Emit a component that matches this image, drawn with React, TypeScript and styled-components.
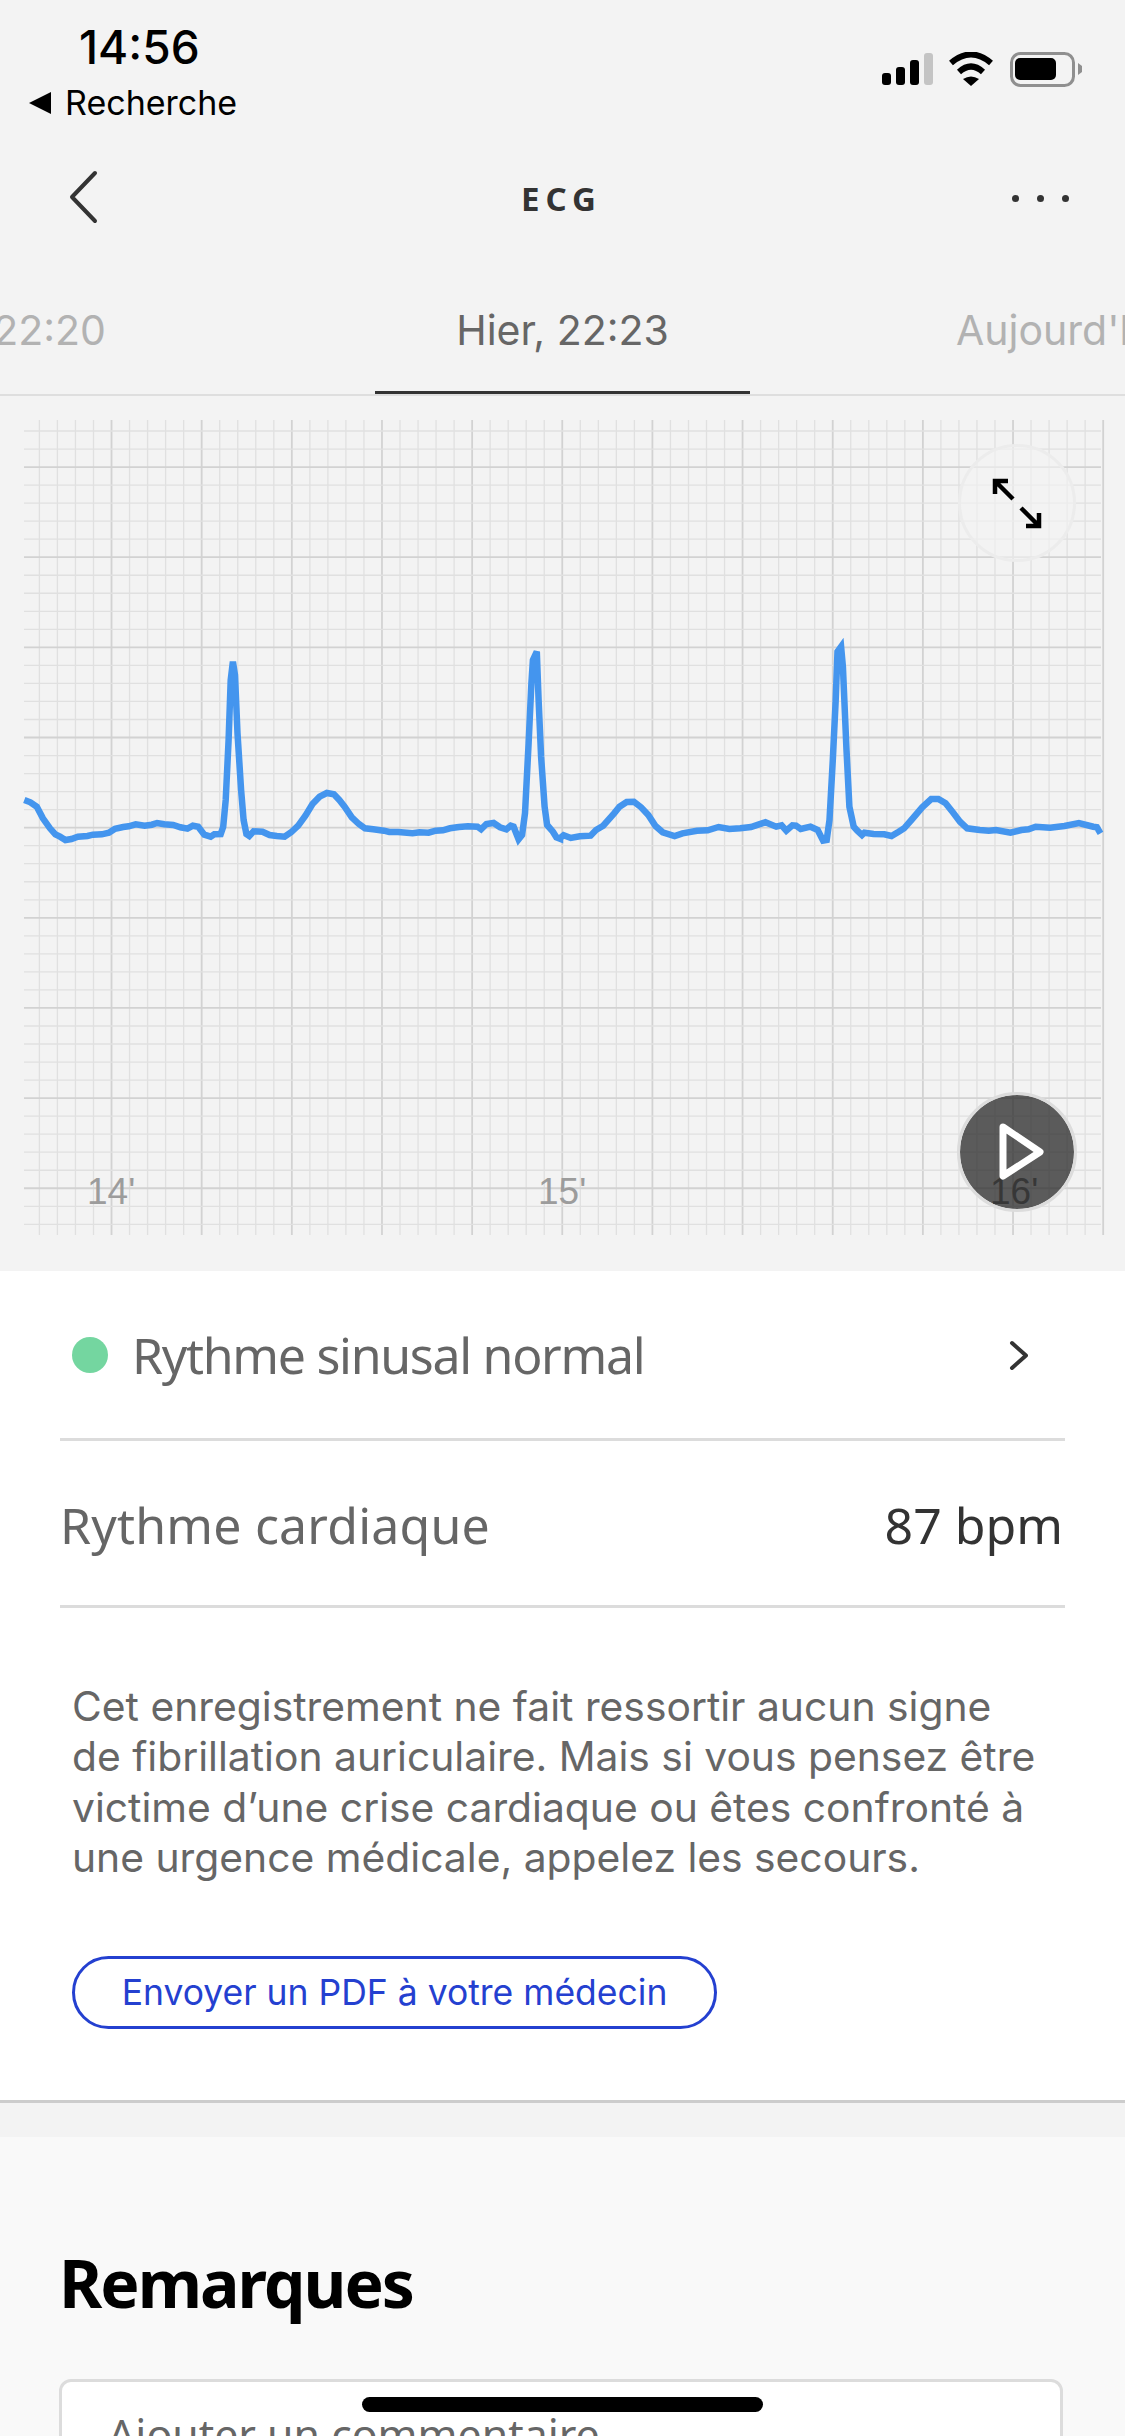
import React from 'react';
import styled, { createGlobalStyle } from 'styled-components';

const GlobalStyle = createGlobalStyle`
  html, body {
    margin: 0;
    padding: 0;
    background: #f3f3f3;
  }
  * {
    box-sizing: border-box;
  }
`;

// traced from the recording, [x, y] as read off two crops of the trace
const traceA = [[68,600],[85,607],[103,620],[120,655],[140,685],[155,703],[168,710],[183,720],[200,717],[218,710],[245,708],[260,704],[285,703],[305,698],[322,686],[345,681],[360,679],[380,673],[405,677],[425,674],[440,669],[460,673],[485,675],[505,682],[525,686],[540,677],[555,680],[572,704],[590,710],[600,703],[618,702],[625,680],[632,600],[640,420],[646,240],[652,185],[658,225],[665,400],[675,570],[682,660],[690,702],[698,708],[710,694],[735,695],[755,705],[775,708],[797,710],[815,697],[835,677],[855,647],[875,612],[895,590],[915,579],[935,583],[950,600],[965,620],[985,652],[1005,672],[1022,685],[1045,688],[1075,692],[1090,696],[1115,696],[1155,700],[1175,697],[1200,698],[1220,692],[1240,691],[1260,685],[1285,681],[1310,679],[1337,680],[1347,688],[1362,672],[1382,669],[1400,682],[1418,688],[1430,677],[1438,680],[1452,718],[1462,705],[1470,640],[1480,430],[1488,250],[1492,180],[1503,155],[1508,300],[1515,470],[1525,620],[1532,675],[1548,695],[1558,712],[1568,716]];
const traceB = [[0,715],[10,706],[30,714],[55,709],[85,707],[100,690],[120,677],[150,640],[165,620],[185,606],[205,605],[225,622],[245,645],[265,678],[285,697],[318,708],[340,700],[380,692],[410,691],[440,681],[470,687],[500,685],[530,681],[550,674],[570,667],[600,680],[615,676],[628,692],[645,676],[655,677],[668,687],[695,680],[715,690],[730,722],[740,720],[748,660],[757,480],[765,300],[770,155],[780,140],[785,200],[795,450],[803,620],[815,680],[825,692],[838,705],[845,698],[870,702],[900,703],[920,708],[940,695],[955,685],[975,660],[1005,622],[1030,597],[1050,597],[1070,610],[1090,637],[1110,665],[1130,685],[1165,690],[1190,692],[1210,690],[1250,698],[1280,690],[1300,688],[1320,680],[1360,683],[1400,678],[1440,669],[1480,680],[1490,682],[1500,700]];

const tracePoints = [
  ...traceA.map(([x, y]) => `${(x / 2.8).toFixed(1)},${(600 + y / 3).toFixed(1)}`),
  ...traceB.map(([x, y]) => `${(560 + x / 2.775).toFixed(1)},${(600 + y / 3).toFixed(1)}`),
].join(' ');

const STEP = 18.03;
const verticals = Array.from({ length: 60 }, (_, i) => 39.4 + i * STEP);
const horizontals = Array.from({ length: 45 }, (_, i) => 431 + i * STEP);

const EcgGrid = () => (
  <ChartSvg viewBox="0 396 1125 875" width={1125} height={875}>
    {verticals.map((x, i) => (
      <line
        key={`v${i}`}
        x1={x}
        x2={x}
        y1={420}
        y2={1235}
        stroke={i % 5 === 4 ? '#d2d2d2' : '#e0e0e0'}
        strokeWidth={i % 5 === 4 ? 1.8 : 1.3}
      />
    ))}
    {horizontals.map((y, i) => (
      <line
        key={`h${i}`}
        x1={24}
        x2={1101}
        y1={y}
        y2={y}
        stroke={i % 5 === 2 ? '#d2d2d2' : '#e0e0e0'}
        strokeWidth={i % 5 === 2 ? 1.8 : 1.3}
      />
    ))}
    <polyline
      points={tracePoints}
      fill="none"
      stroke="#4495ee"
      strokeWidth={6.5}
      strokeLinejoin="miter"
      strokeLinecap="butt"
    />
  </ChartSvg>
);

const StatusIcons = () => (
  <svg width={204} height={36} viewBox="880 52 204 36">
    <rect x={882} y={73} width={9} height={12} rx={3} fill="#000" />
    <rect x={896} y={67} width={9} height={18} rx={3} fill="#000" />
    <rect x={910} y={60} width={9} height={25} rx={3} fill="#000" />
    <rect x={924} y={53} width={9} height={32} rx={3} fill="#c4c4c4" />
    <path d="M951 63 Q971 46 991 63" fill="none" stroke="#000" strokeWidth={6} />
    <path d="M959 72 Q971 61 983 72" fill="none" stroke="#000" strokeWidth={6} />
    <path d="M963 79 Q971 74 979 79 L971 86 Z" fill="#000" />
    <rect x={1011.5} y={53.5} width={62} height={32} rx={9} fill="none" stroke="#8f8f8f" strokeWidth={3} />
    <rect x={1015} y={58} width={41} height={22} rx={5} fill="#000" />
    <path d="M1078 63 L1082 66 V72 L1078 75 Z" fill="#8f8f8f" />
  </svg>
);

export default function App() {
  return (
    <Page>
      <GlobalStyle />
      <StatusBar>
        <StatusLeft>
          <Clock>14:56</Clock>
          <BackLink>
            <BackTriangle />
            Recherche
          </BackLink>
        </StatusLeft>
        <StatusIcons />
      </StatusBar>

      <NavBar>
        <svg width={40} height={60} viewBox="60 168 40 60">
          <path d="M95 173 L72 197 L95 221" fill="none" stroke="#333" strokeWidth={4} strokeLinecap="round" strokeLinejoin="round" />
        </svg>
        <NavTitle>ECG</NavTitle>
        <MoreDots>
          <Dot />
          <Dot />
          <Dot />
        </MoreDots>
      </NavBar>

      <TabRow>
        <Tab $side="left">22:20</Tab>
        <Tab $side="active">Hier, 22:23</Tab>
        <Tab $side="right">Aujourd'hui</Tab>
      </TabRow>

      <ChartSection>
        <EcgGrid />
        <TimeLabel $left={87}>14'</TimeLabel>
        <TimeLabel $left={538}>15'</TimeLabel>
        <TimeLabel $left={990} $dark>16'</TimeLabel>
        <ExpandButton>
          <svg width={60} height={60} viewBox="987 473 60 60">
            <path d="M1013 499 L996 482 M995 494 L995 481 L1008 481" fill="none" stroke="#000" strokeWidth={4.5} />
            <path d="M1021 508 L1038 525 M1039 513 L1039 526 L1026 526" fill="none" stroke="#000" strokeWidth={4.5} />
          </svg>
        </ExpandButton>
        <PlayButton>
          <svg width={60} height={70} viewBox="987 1117 60 70">
            <path d="M1003 1127 L1040 1152 L1003 1176 Z" fill="none" stroke="#fff" strokeWidth={7} strokeLinejoin="round" />
          </svg>
        </PlayButton>
      </ChartSection>

      <ResultCard>
        <ResultRow $inset>
          <RowLabel>
            <GreenDot />
            <RhythmText $spacing={-1.3}>Rythme sinusal normal</RhythmText>
          </RowLabel>
          <svg width={20} height={30} viewBox="1008 1341 20 30">
            <path d="M1012 1344 L1026 1356.5 L1012 1369" fill="none" stroke="#333" strokeWidth={4} strokeLinecap="round" strokeLinejoin="round" />
          </svg>
        </ResultRow>
        <ResultRow>
          <RhythmText $spacing={0.2}>Rythme cardiaque</RhythmText>
          <RowValue>87 bpm</RowValue>
        </ResultRow>
        <Notice>
          Cet enregistrement ne fait ressortir aucun signe
          <br />
          de fibrillation auriculaire. Mais si vous pensez être
          <br />
          victime d’une crise cardiaque ou êtes confronté à
          <br />
          une urgence médicale, appelez les secours.
        </Notice>
        <PdfButton>Envoyer un PDF à votre médecin</PdfButton>
      </ResultCard>

      <Gap />

      <NotesSection>
        <NotesTitle>Remarques</NotesTitle>
        <CommentBox>Ajouter un commentaire</CommentBox>
      </NotesSection>

      <HomeIndicator />
    </Page>
  );
}

const Page = styled.div`
  position: relative;
  width: 1125px;
  height: 2436px;
  overflow: hidden;
  background: #f3f3f3;
  font-family: "Noto Sans", sans-serif;
`;

const StatusBar = styled.div`
  height: 148px;
  display: flex;
  justify-content: space-between;
  align-items: flex-start;
  padding: 18px 41px 0 0;

  svg {
    margin-top: 34px;
  }
`;

const StatusLeft = styled.div`
  display: flex;
  flex-direction: column;
  padding-left: 29px;
`;

const Clock = styled.div`
  font-family: Inter, sans-serif;
  font-weight: 500;
  font-size: 46px;
  line-height: 58px;
  color: #000;
  padding-left: 50px;
`;

const BackLink = styled.div`
  display: flex;
  align-items: center;
  gap: 14px;
  font-family: Inter, sans-serif;
  font-size: 34px;
  line-height: 54px;
  color: #000;
`;

const BackTriangle = styled.span`
  width: 0;
  height: 0;
  border-style: solid;
  border-width: 11px 22px 11px 0;
  border-color: transparent #000 transparent transparent;
`;

const NavBar = styled.div`
  height: 100px;
  display: grid;
  grid-template-columns: 1fr auto 1fr;
  align-items: center;
  padding: 0 56px 0 60px;
`;

const NavTitle = styled.div`
  font-weight: 700;
  font-size: 33px;
  letter-spacing: 6px;
  padding-right: 6px;
  color: #333;
`;

const MoreDots = styled.div`
  display: flex;
  justify-content: flex-end;
  gap: 18px;
`;

const Dot = styled.span`
  width: 7px;
  height: 7px;
  border-radius: 50%;
  background: #333;
`;

const TabRow = styled.div`
  height: 148px;
  display: grid;
  grid-template-columns: 375px 375px 375px;
  border-bottom: 2px solid #dedede;
  overflow: hidden;
`;

const Tab = styled.div<{ $side: 'left' | 'active' | 'right' }>`
  display: flex;
  justify-content: ${p => (p.$side === 'left' ? 'flex-end' : p.$side === 'active' ? 'center' : 'flex-start')};
  font-family: Inter, sans-serif;
  font-size: 41px;
  line-height: 50px;
  white-space: nowrap;
  padding-top: 57px;
  color: ${p => (p.$side === 'active' ? '#666' : '#b2b2b2')};
  padding-right: ${p => (p.$side === 'left' ? '269px' : '0')};
  padding-left: ${p => (p.$side === 'right' ? '206px' : '0')};
  border-bottom: ${p => (p.$side === 'active' ? '3px solid #333' : 'none')};
`;

const ChartSection = styled.div`
  position: relative;
  height: 875px;
`;

const ChartSvg = styled.svg`
  display: block;
`;

const TimeLabel = styled.span<{ $left: number; $dark?: boolean }>`
  position: absolute;
  left: ${p => p.$left}px;
  top: 775px;
  font-family: "Liberation Sans", sans-serif;
  font-size: 37px;
  line-height: 42px;
  color: ${p => (p.$dark ? '#555' : '#9c9c9c')};
`;

const RoundButton = styled.div`
  position: absolute;
  display: flex;
  align-items: center;
  justify-content: center;
  border-radius: 50%;
`;

const ExpandButton = styled(RoundButton)`
  left: 958px;
  top: 48px;
  width: 118px;
  height: 118px;
  border: 3px solid #ececec;
  background: rgba(243, 243, 243, 0.6);
`;

const PlayButton = styled(RoundButton)`
  left: 957px;
  top: 696px;
  width: 120px;
  height: 120px;
  border: 3px solid #dcdcdc;
  background: rgba(48, 48, 48, 0.78);
  background-clip: padding-box;
`;

const ResultCard = styled.div`
  background: #fff;
  height: 832px;
  padding: 0 60px;
  border-bottom: 3px solid #cccccc;
`;

const ResultRow = styled.div<{ $inset?: boolean }>`
  height: ${p => (p.$inset ? '170px' : '167px')};
  display: flex;
  align-items: center;
  justify-content: space-between;
  border-bottom: 3px solid #dcdcdc;
  padding: ${p => (p.$inset ? '0 37px 0 12px' : '4px 2px 0 0')};
`;

const RowLabel = styled.div`
  display: flex;
  align-items: center;
  gap: 24px;
`;

const GreenDot = styled.span`
  width: 36px;
  height: 36px;
  border-radius: 50%;
  background: #74d6a0;
`;

const RhythmText = styled.span<{ $spacing: number }>`
  font-size: 50px;
  letter-spacing: ${p => p.$spacing}px;
  color: #666;
`;

const RowValue = styled.span`
  font-size: 50px;
  color: #333;
`;

const Notice = styled.p`
  margin: 73px 0 0 12px;
  font-family: Inter, sans-serif;
  font-size: 40.8px;
  line-height: 50.3px;
  color: #666;
  white-space: nowrap;
`;

const PdfButton = styled.button`
  display: block;
  margin: 74px 0 0 12px;
  width: 645px;
  height: 73px;
  padding: 0;
  border: 3px solid #2440d0;
  border-radius: 37px;
  background: #fff;
  font-family: Inter, sans-serif;
  font-size: 35.5px;
  color: #2440d0;
`;

const Gap = styled.div`
  height: 34px;
`;

const NotesSection = styled.div`
  background: #f9f9f9;
  height: 300px;
  padding: 100px 62px 0 59px;
`;

const NotesTitle = styled.h2`
  margin: 0;
  font-size: 66px;
  line-height: 90px;
  font-weight: 700;
  letter-spacing: -2px;
  color: #000;
`;

const CommentBox = styled.div`
  margin-top: 52px;
  height: 120px;
  padding: 22px 46px;
  border: 3px solid #dcdcdc;
  border-radius: 12px;
  background: #fff;
  font-size: 42.8px;
  color: #666;
`;

const HomeIndicator = styled.div`
  position: absolute;
  left: 362px;
  top: 2397px;
  width: 401px;
  height: 15px;
  border-radius: 8px;
  background: #000;
`;
